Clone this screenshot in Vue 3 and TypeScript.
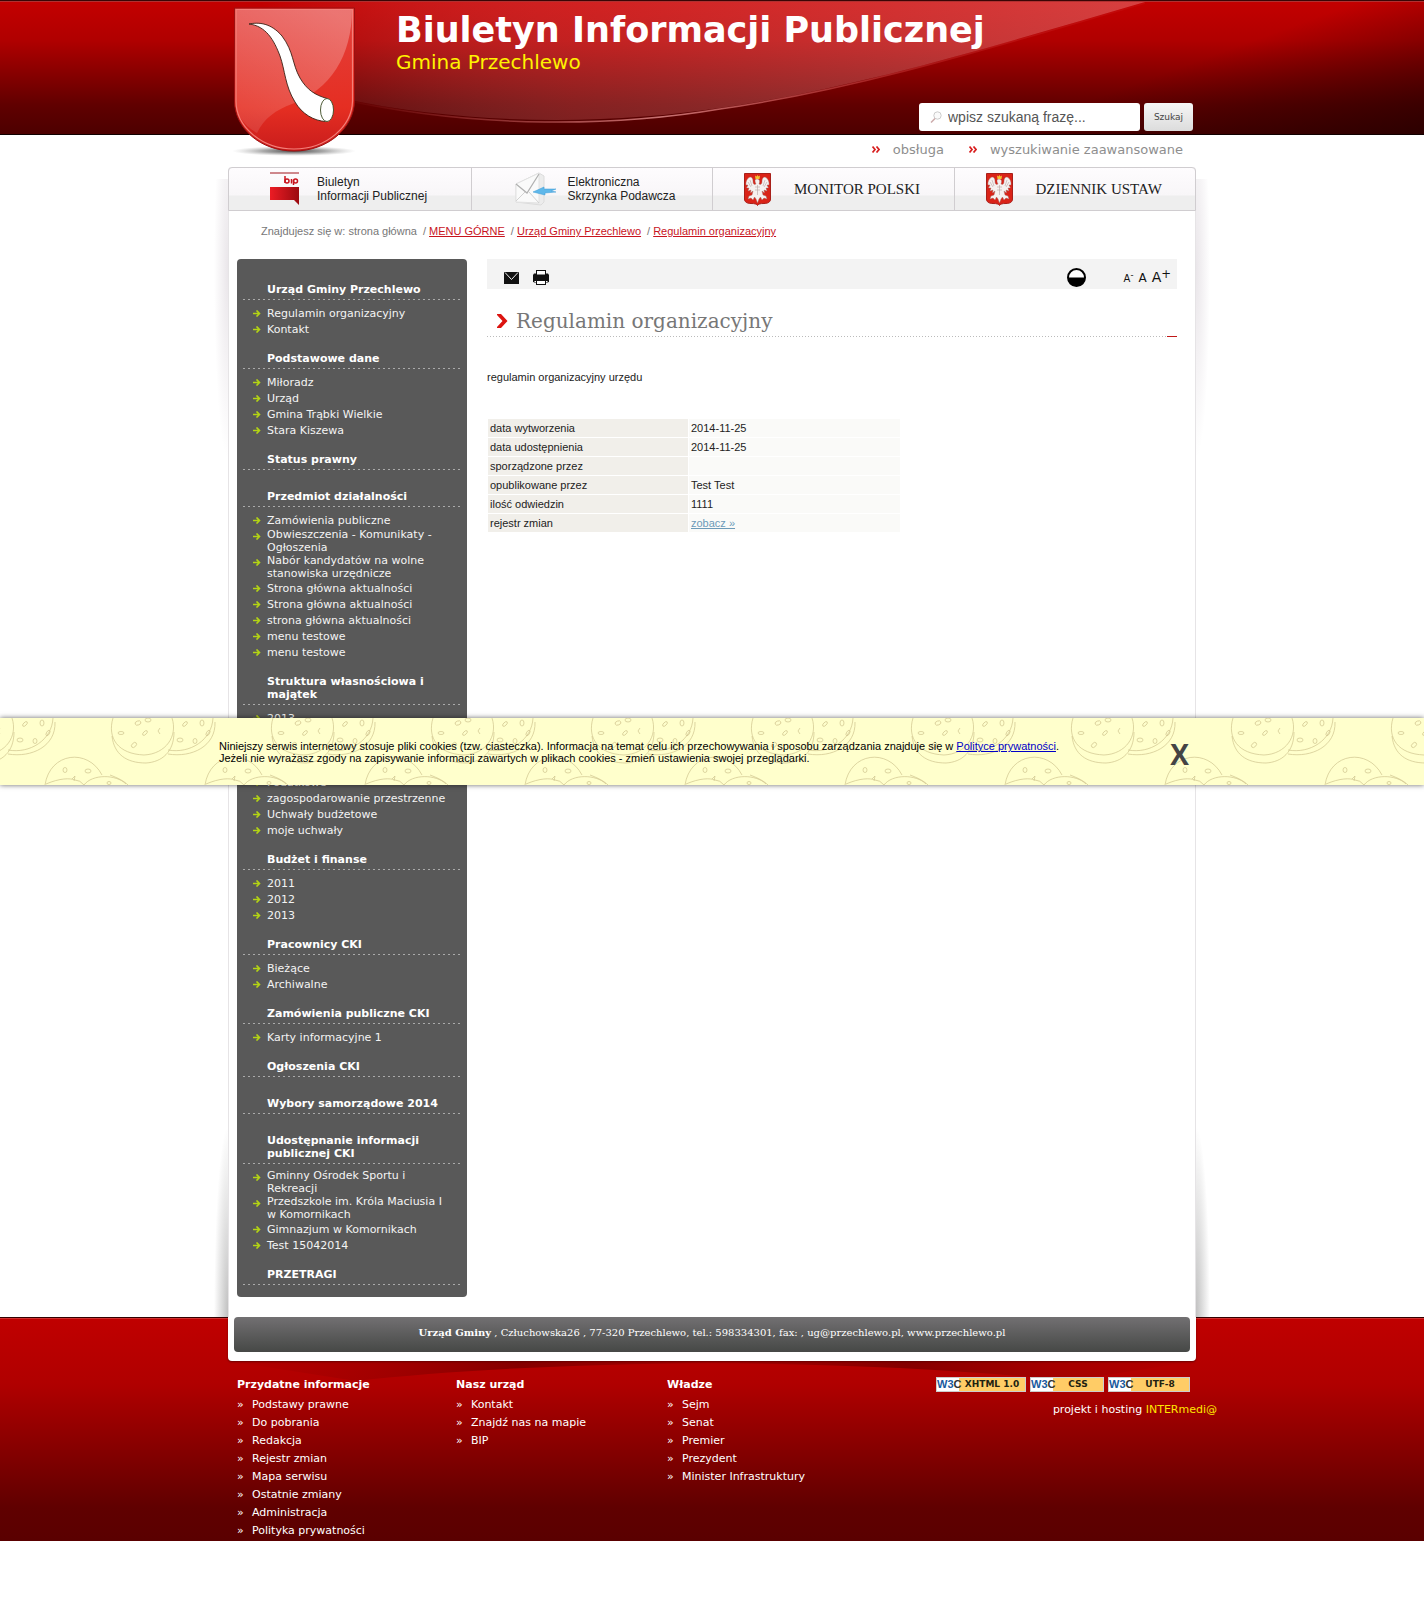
<script setup lang="ts">
import { ref } from 'vue'

interface MenuGroup {
  title: string
  items: string[]
}

interface FooterColumn {
  title: string
  items: string[]
}

interface Badge {
  label: string
  width: number
}

const menu: MenuGroup[] = [
  { title: 'Urząd Gminy Przechlewo', items: ['Regulamin organizacyjny', 'Kontakt'] },
  { title: 'Podstawowe dane', items: ['Miłoradz', 'Urząd', 'Gmina Trąbki Wielkie', 'Stara Kiszewa'] },
  { title: 'Status prawny', items: [] },
  {
    title: 'Przedmiot działalności',
    items: [
      'Zamówienia publiczne',
      'Obwieszczenia - Komunikaty - Ogłoszenia',
      'Nabór kandydatów na wolne stanowiska urzędnicze',
      'Strona główna aktualności',
      'Strona główna aktualności',
      'strona główna aktualności',
      'menu testowe',
      'menu testowe',
    ],
  },
  {
    title: 'Struktura własnościowa i majątek',
    items: [
      '2013',
      '',
      '',
      '',
      'Podatkowe',
      'zagospodarowanie przestrzenne',
      'Uchwały budżetowe',
      'moje uchwały',
    ],
  },
  { title: 'Budżet i finanse', items: ['2011', '2012', '2013'] },
  { title: 'Pracownicy CKI', items: ['Bieżące', 'Archiwalne'] },
  { title: 'Zamówienia publiczne CKI', items: ['Karty informacyjne 1'] },
  { title: 'Ogłoszenia CKI', items: [] },
  { title: 'Wybory samorządowe 2014', items: [] },
  {
    title: 'Udostępnanie informacji publicznej CKI',
    items: [
      'Gminny Ośrodek Sportu i Rekreacji',
      'Przedszkole im. Króla Maciusia I w Komornikach',
      'Gimnazjum w Komornikach',
      'Test 15042014',
    ],
  },
  { title: 'PRZETRAGI', items: [] },
]

const crumbs: string[] = ['MENU GÓRNE', 'Urząd Gminy Przechlewo', 'Regulamin organizacyjny']

const details: [string, string][] = [
  ['data wytworzenia', '2014-11-25'],
  ['data udostępnienia', '2014-11-25'],
  ['sporządzone przez', ''],
  ['opublikowane przez', 'Test Test'],
  ['ilość odwiedzin', '1111'],
]

const footerColumns: FooterColumn[] = [
  {
    title: 'Przydatne informacje',
    items: [
      'Podstawy prawne',
      'Do pobrania',
      'Redakcja',
      'Rejestr zmian',
      'Mapa serwisu',
      'Ostatnie zmiany',
      'Administracja',
      'Polityka prywatności',
    ],
  },
  { title: 'Nasz urząd', items: ['Kontakt', 'Znajdź nas na mapie', 'BIP'] },
  { title: 'Władze', items: ['Sejm', 'Senat', 'Premier', 'Prezydent', 'Minister Infrastruktury'] },
]

const badges: Badge[] = [
  { label: 'XHTML 1.0', width: 90 },
  { label: 'CSS', width: 74 },
  { label: 'UTF-8', width: 82 },
]

const phrase = ref('')
const cookieVisible = ref(true)
</script>

<template>
  <div class="page">
    <header class="top">
      <div class="wrap top-inner">
        <svg class="swoosh" width="968" height="135" viewBox="228 0 968 135" aria-hidden="true">
          <defs>
            <linearGradient id="swooshFill" x1="0" x2="1" y1="0" y2="0">
              <stop offset="0" stop-color="#fff" stop-opacity="0" />
              <stop offset="0.35" stop-color="#f88" stop-opacity="0.24" />
              <stop offset="1" stop-color="#fbb" stop-opacity="0.34" />
            </linearGradient>
            <linearGradient id="swooshEdge" x1="0" x2="1" y1="0" y2="0">
              <stop offset="0" stop-color="#e66" stop-opacity="0" />
              <stop offset="0.4" stop-color="#e99" stop-opacity="0.75" />
              <stop offset="0.75" stop-color="#d44" stop-opacity="0.3" />
              <stop offset="1" stop-color="#d44" stop-opacity="0.1" />
            </linearGradient>
          </defs>
          <path d="M260 2H1145C1000 44 860 88 720 108C620 123 480 128 340 98Z" fill="url(#swooshFill)" />
          <path d="M1145 3C1000 45 860 89 720 109C620 126 480 130 340 99" fill="none" stroke="url(#swooshEdge)" stroke-width="1.5" />
        </svg>
        <svg class="crest" width="128" height="150" viewBox="0 0 128 150" role="img" aria-label="Herb">
          <defs>
            <radialGradient id="crestShadow">
              <stop offset="0" stop-color="#333" stop-opacity="0.9" />
              <stop offset="0.5" stop-color="#555" stop-opacity="0.5" />
              <stop offset="1" stop-color="#999" stop-opacity="0" />
            </radialGradient>
            <linearGradient id="crestShine" x1="0.8" y1="0" x2="0.1" y2="1">
              <stop offset="0" stop-color="#fff" stop-opacity="0.28" />
              <stop offset="1" stop-color="#fff" stop-opacity="0.1" />
            </linearGradient>
            <linearGradient id="crestRed" x1="0" y1="0" x2="0" y2="1">
              <stop offset="0" stop-color="#e4403c" />
              <stop offset="0.7" stop-color="#e52e22" />
              <stop offset="1" stop-color="#c91c1c" />
            </linearGradient>
          </defs>
          <ellipse cx="64" cy="145" rx="62" ry="5" fill="url(#crestShadow)" />
          <path d="M4.500 2H124.500V95C124 122 98 145 64 145C30 145 4.500 122 4.500 95Z" fill="url(#crestRed)" stroke="#9c1010" stroke-width="1" />
          <path d="M6 3.500H122C122 50 100 84 62 98C46 104 34 112 27 127C13 119 6 108 6 95Z" fill="url(#crestShine)" />
          <path d="M6 95V3.500H122.500V95C122 120 97 143 64 143C31 143 6 120 6 95Z" fill="none" stroke="#f4807a" stroke-width="1.200" />
          <path d="M19 18C29 16 41 17 52 30C64 46 62 58 70 72C77 84 85 89 97 92.500L96 115.500C84 115 72 108 65 96C55 80 55 64 50 50C44 34 36 20 19 18Z" fill="#fff" stroke="#3a2015" stroke-width="0.900" />
          <ellipse cx="97" cy="104" rx="6.500" ry="11.500" fill="#fff" stroke="#3a4a20" stroke-width="0.900" />
        </svg>
        <div class="brand">
          <h1>Biuletyn Informacji Publicznej</h1>
          <p>Gmina Przechlewo</p>
        </div>
        <form class="search" @submit.prevent>
          <label class="field">
            <svg width="12" height="12" viewBox="0 0 12 12" aria-hidden="true">
              <circle cx="7.500" cy="4.500" r="3.700" fill="#fafafa" stroke="#ccc" />
              <path d="M5 7.500L1 11.500" stroke="#caa" stroke-width="1.500" />
            </svg>
            <input v-model="phrase" type="text" placeholder="wpisz szukaną frazę..." aria-label="wpisz szukaną frazę" />
          </label>
          <button type="submit">Szukaj</button>
        </form>
      </div>
    </header>

    <nav class="wrap quick">
      <a v-for="q in ['obsługa', 'wyszukiwanie zaawansowane']" :key="q" href="#">
        <svg width="8" height="7" viewBox="0 0 8 7" aria-hidden="true">
          <path d="M0.500 0.500L3 3.500L0.500 6.500M4.500 0.500L7 3.500L4.500 6.500" fill="none" stroke="#d81e1e" stroke-width="1.700" />
        </svg>
        <span>{{ q }}</span>
      </a>
    </nav>

    <div class="wrap panel">
      <nav class="tabs">
        <a href="#" class="tab tab-bip">
          <svg width="30" height="34" viewBox="0 0 30 34" aria-hidden="true">
            <defs>
              <linearGradient id="bipRed" x1="0" x2="1">
                <stop offset="0" stop-color="#ec1c24" />
                <stop offset="1" stop-color="#9b0a10" />
              </linearGradient>
            </defs>
            <path d="M0 1H29" stroke="#a0141c" stroke-width="1" />
            <path d="M0 15H29V33L24 28H0Z" fill="url(#bipRed)" />
            <g fill="none" stroke="#c8141e" stroke-width="1.500">
              <path d="M15 4V11" />
              <circle cx="17" cy="9" r="2" />
              <path d="M21.500 7V11.500" />
              <circle cx="25.500" cy="9" r="2" />
              <path d="M23.500 8V13" />
            </g>
          </svg>
          <span>Biuletyn<br />Informacji Publicznej</span>
        </a>
        <a href="#" class="tab tab-box">
          <svg width="42" height="34" viewBox="0 0 42 34" aria-hidden="true">
            <path d="M1 12L24 1L29 4V30L26 33L1 30Z" fill="#ececec" stroke="#dcdcdc" />
            <path d="M1 12L24 1V31L1 30Z" fill="#fafafa" stroke="#e2e2e2" />
            <path d="M1 12L12 21L24 2" fill="none" stroke="#b0b0b0" stroke-width="1.200" />
            <path d="M1 29L10 20M24 31L14 20" stroke="#d2d2d2" />
            <path d="M18 20L29 15L29 17H41L36 19L41 20L30 21V23Z" fill="#5fb8ea" stroke="#3a9bd6" stroke-width="0.500" />
          </svg>
          <span>Elektroniczna<br />Skrzynka Podawcza</span>
        </a>
        <a v-for="law in ['MONITOR POLSKI', 'DZIENNIK USTAW']" :key="law" href="#" class="tab tab-law">
          <svg width="27" height="33" viewBox="0 0 27 33" aria-hidden="true">
            <path d="M0.500 0.500H26.500V26C26.500 29 24 30.500 20 30.500C16 30.500 14.500 31 13.500 32.500C12.500 31 11 30.500 7 30.500C3 30.500 0.500 29 0.500 26Z" fill="#da2318" stroke="#a8201a" />
            <path d="M13 6C10 6 11 9 12 11C10 12 9 11 9 8C9 6 8 4 6 4C3 5 1.500 9 2 12L4 12L2.500 15L5 15L4 18L7 17L6.500 20L9 18L8 22L5 23L4 26L7 25L9 27L10.500 24L12 26L13.500 30L15 26L16.500 24L18 27L20 25L23 26L22 23L19 22L18 18L20.500 20L20 17L23 18L22 15L24.500 15L23 12L25 12C25.500 9 24 5 21 4C19 4 18 6 18 8C18 11 17 12 15 11C16 9 16 6 13 6Z" fill="#f6f1f0" stroke="#9a6a66" stroke-width="0.400" />
            <path d="M6 7L8 13M4 9L7 14M21 7L19 13M23 9L20 14M13.500 12V22M11 14L16 14M11 17H16" stroke="#b9a5a3" stroke-width="0.600" />
            <path d="M11 2.500L12.500 3.500L13.500 2L14.500 3.500L16 2.500L15.500 6H11.500Z" fill="#f2c230" />
          </svg>
          <span>{{ law }}</span>
        </a>
      </nav>

      <nav class="crumbs">
        <span class="home">Znajdujesz się w: strona główna</span>
        <span v-for="c in crumbs" :key="c" class="crumb">/ <a href="#">{{ c }}</a></span>
      </nav>

      <div class="columns">
        <aside class="side">
          <section v-for="group in menu" :key="group.title">
            <h2>{{ group.title }}</h2>
            <ul>
              <li v-for="(item, i) in group.items" :key="i">
                <svg width="8" height="7" viewBox="0 0 8 7" aria-hidden="true">
                  <path d="M0 3.500H6M3.500 0.500L6.500 3.500L3.500 6.500" fill="none" stroke="#b4d414" stroke-width="1.600" />
                </svg>
                <a href="#">{{ item }}</a>
              </li>
            </ul>
          </section>
        </aside>

        <main class="content">
          <div class="tools">
            <a href="#" aria-label="Wyślij">
              <svg width="15" height="12" viewBox="0 0 15 12">
                <rect width="15" height="12" fill="#111" />
                <path d="M1 0.500L7.500 7.500L14 0.500" fill="none" stroke="#eee" stroke-width="1" />
              </svg>
            </a>
            <a href="#" aria-label="Drukuj">
              <svg width="16" height="15" viewBox="0 0 16 15">
                <path d="M1 3.500H15L16 5V11.500L15 12.500H1L0 11.500V5Z" fill="#111" />
                <rect x="3.500" y="0.500" width="9" height="4.500" fill="#fff" stroke="#111" />
                <rect x="3.500" y="10.500" width="9" height="4" fill="#fff" stroke="#111" />
                <path d="M1.500 11.500H3M13 11.500H14.500" stroke="#fff" />
              </svg>
            </a>
            <a href="#" class="contrast" aria-label="Kontrast">
              <svg width="19" height="19" viewBox="0 0 19 19">
                <circle cx="9.500" cy="9.500" r="8.500" fill="#fff" stroke="#000" stroke-width="2" />
                <path d="M1 9.500H18A8.500 8.500 0 0 1 1 9.500Z" fill="#000" />
              </svg>
            </a>
            <div class="sizes">
              <a href="#" class="size-s">A<sup>-</sup></a>
              <a href="#" class="size-m">A</a>
              <a href="#" class="size-l">A<sup>+</sup></a>
            </div>
          </div>

          <h2 class="heading">
            <svg width="11" height="14" viewBox="0 0 11 14" aria-hidden="true">
              <path d="M0 0H4L10.500 7L4 14H0V13L5.500 7L0 1Z" fill="#dc1410" />
            </svg>
            Regulamin organizacyjny
          </h2>
          <p class="lead">regulamin organizacyjny urzędu</p>

          <table class="details">
            <tbody>
              <tr v-for="row in details" :key="row[0]">
                <th scope="row">{{ row[0] }}</th>
                <td>{{ row[1] }}</td>
              </tr>
              <tr>
                <th scope="row">rejestr zmian</th>
                <td><a href="#">zobacz »</a></td>
              </tr>
            </tbody>
          </table>
        </main>
      </div>
    </div>

    <footer class="bottom">
      <div class="wrap panel-end">
        <p class="address">
          <b>Urząd Gminy</b> , Człuchowska26 , 77-320 Przechlewo, tel.: 598334301, fax: , ug@przechlewo.pl, www.przechlewo.pl
        </p>
      </div>
      <svg class="wrap arc" height="24" viewBox="0 0 968 24" preserveAspectRatio="none" aria-hidden="true">
        <defs>
          <linearGradient id="arcFade" x1="0" x2="1">
            <stop offset="0" stop-color="#600" stop-opacity="0" />
            <stop offset="0.15" stop-color="#600" stop-opacity="0.2" />
            <stop offset="0.3" stop-color="#500" stop-opacity="0.5" />
            <stop offset="0.5" stop-color="#500" stop-opacity="0.1" />
            <stop offset="0.7" stop-color="#500" stop-opacity="0.5" />
            <stop offset="0.85" stop-color="#600" stop-opacity="0.2" />
            <stop offset="1" stop-color="#600" stop-opacity="0" />
          </linearGradient>
        </defs>
        <path d="M0 0H968L840 20Q700 4 484 2Q268 4 128 20Z" fill="url(#arcFade)" />
      </svg>
      <div class="wrap links">
        <section v-for="col in footerColumns" :key="col.title">
          <h3>{{ col.title }}</h3>
          <ul>
            <li v-for="item in col.items" :key="item"><a href="#">{{ item }}</a></li>
          </ul>
        </section>
        <div class="credits">
          <div class="badges">
            <a v-for="b in badges" :key="b.label" href="#" class="badge" :style="{ width: b.width + 'px' }">
              <span class="w3"><i>W3</i>C</span><b>{{ b.label }}</b>
            </a>
          </div>
          <p>projekt i hosting <a href="#">INTERmedi@</a></p>
        </div>
      </div>
    </footer>

    <div v-if="cookieVisible" class="cookies">
      <svg class="cookie-art" width="100%" height="67" aria-hidden="true">
        <defs>
          <pattern id="cookies" width="160" height="67" patternUnits="userSpaceOnUse">
            <g fill="none" stroke="#cfc38c" stroke-width="0.700">
              <g v-for="dx in [0, -160]" :key="dx" :transform="`translate(${dx} 0)`">
                <path d="M113 0C107 20 118 36 144 37C166 36 178 18 172 0" />
                <path d="M112 18C114 36 126 45 146 45C162 44 174 34 174 14" />
                <path d="M168 32C190 36 212 22 213 0" />
                <path d="M168 36C192 40 216 28 215 4" />
                <ellipse cx="138" cy="5" rx="3" ry="2" transform="rotate(-20 138 5)" />
                <ellipse cx="148" cy="2" rx="3" ry="2" />
                <ellipse cx="121" cy="15" rx="3" ry="1.500" />
                <ellipse cx="145" cy="15" rx="3" ry="1.500" transform="rotate(-45 145 15)" />
                <path d="M160 10L158 13L160 16" />
                <ellipse cx="134" cy="27" rx="3" ry="2" transform="rotate(-45 134 27)" />
                <ellipse cx="185" cy="6" rx="3" ry="1.500" transform="rotate(-45 185 6)" />
                <ellipse cx="202" cy="5" rx="2" ry="3" />
                <ellipse cx="208" cy="15" rx="1.500" ry="3" transform="rotate(30 208 15)" />
                <ellipse cx="180" cy="22" rx="3" ry="2" />
                <ellipse cx="195" cy="23" rx="2" ry="2.500" />
              </g>
              <path d="M45 67C50 34 88 30 102 57" />
              <path d="M46 66C60 60 70 60 75 62Q80 62 84 67C92 56 116 56 126 66" />
              <path d="M72 61L75 58L74 63" />
              <path d="M110 57C118 60 124 63 128 67" />
              <ellipse cx="65" cy="52" rx="2" ry="2.500" />
              <ellipse cx="88" cy="53" rx="3" ry="2" />
              <ellipse cx="109" cy="65" rx="2" ry="1.500" />
            </g>
          </pattern>
        </defs>
        <rect width="100%" height="67" fill="url(#cookies)" />
      </svg>
      <div class="cookie-inner">
        <p>
          Niniejszy serwis internetowy stosuje pliki cookies (tzw. ciasteczka). Informacja na temat celu ich przechowywania i sposobu zarządzania znajduje się w
          <a href="#">Polityce prywatności</a>.<br />
          Jeżeli nie wyrażasz zgody na zapisywanie informacji zawartych w plikach cookies - zmień ustawienia swojej przeglądarki.
        </p>
        <button type="button" @click="cookieVisible = false">X</button>
      </div>
    </div>
  </div>
</template>

<style>
body {
  background: #fff;
}
</style>

<style scoped>
.page {
  position: relative;
  font: 11px/13px 'Liberation Sans', Arial, sans-serif;
  color: #222;
}

h1, h2, h3, p, ul {
  margin: 0;
  padding: 0;
}

ul {
  list-style: none;
}

svg {
  display: block;
  flex: none;
}

.wrap {
  width: 968px;
  max-width: 100%;
  margin: 0 auto;
  box-sizing: border-box;
}

/* header */
.top {
  height: 135px;
  background:
    linear-gradient(#3a0505, #3a0505) 0 0 / 100% 1px no-repeat,
    linear-gradient(#b03030, #b03030) 0 1px / 100% 1px no-repeat,
    linear-gradient(#100, #100) 0 100% / 100% 1px no-repeat,
    linear-gradient(160deg, rgba(30, 0, 0, 0) 76%, rgba(30, 0, 0, 0.7) 100%),
    linear-gradient(#c40000 0, #b00000 30%, #600000 78%, #4c0000 100%);
}

.top-inner {
  position: relative;
  display: flex;
  height: 135px;
}

.swoosh {
  position: absolute;
  top: 0;
  left: 0;
}

.crest {
  position: relative;
  margin: 6px 0 0 2px;
}

.brand {
  position: relative;
  margin-left: 38px;
  padding-top: 9px;
  font-family: 'DejaVu Sans', Verdana, sans-serif;
}

.brand h1 {
  color: #fff;
  font-size: 35px;
  line-height: 42px;
  white-space: nowrap;
}

.brand p {
  color: #fff200;
  font-size: 20px;
  line-height: 22px;
}

.search {
  position: absolute;
  right: 3px;
  bottom: 4px;
  display: flex;
  gap: 4px;
}

.field {
  display: flex;
  align-items: center;
  gap: 6px;
  width: 221px;
  height: 28px;
  padding: 0 11px;
  box-sizing: border-box;
  border-radius: 3px;
  background: #fff;
}

.field input {
  flex: 1;
  min-width: 0;
  padding: 0;
  border: 0;
  outline: 0;
  background: none;
  font: 14px 'Liberation Sans', Arial, sans-serif;
}

.field input::placeholder {
  color: #555;
  opacity: 1;
}

.search button {
  width: 49px;
  height: 28px;
  padding: 0;
  border: 0;
  border-radius: 3px;
  background: linear-gradient(#f6f6f6, #dcdcdc);
  color: #444;
  font: 9px 'DejaVu Sans', Verdana, sans-serif;
}

.quick {
  display: flex;
  justify-content: flex-end;
  gap: 25px;
  height: 32px;
  padding: 7px 13px 0 0;
  font: 13px/15px 'DejaVu Sans', Verdana, sans-serif;
}

.quick a {
  display: flex;
  align-items: center;
  gap: 13px;
  height: 15px;
  color: #8e8e8e;
  text-decoration: none;
}

/* panel */
.panel {
  position: relative;
  border-radius: 4px 4px 0 0;
  background: #fff;
  box-shadow: inset 1px 0 #e6e4e6, inset -1px 0 #e6e4e6;
}

.panel::before,
.panel::after {
  content: '';
  position: absolute;
  top: 12px;
  bottom: 0;
  width: 14px;
  background:
    radial-gradient(ellipse 14px 190px at 100% 90px, rgba(90, 60, 90, 0.13), transparent) 0 0 / 100% 280px no-repeat,
    radial-gradient(ellipse 14px 190px at 100% 100%, rgba(60, 60, 60, 0.32), transparent) 0 100% / 100% 190px no-repeat;
}

.panel::before {
  left: -14px;
}

.panel::after {
  right: -14px;
  transform: scaleX(-1);
}

.tabs {
  display: grid;
  grid-template-columns: repeat(4, 1fr);
  height: 44px;
  box-sizing: border-box;
  border: 1px solid #d0cdd0;
  border-radius: 4px 4px 0 0;
  background: linear-gradient(#fefcfe 0, #f8f6f8 65%, #eee 66%, #eee 100%);
}

.tab {
  display: flex;
  align-items: center;
  color: #222;
  text-decoration: none;
  font-size: 12px;
  line-height: 14px;
}

.tab + .tab {
  border-left: 1px solid #d0cdd0;
}

.tab-bip {
  gap: 17px;
  padding-left: 41px;
}

.tab-box {
  gap: 11px;
  padding-left: 43px;
}

.tab-law {
  gap: 23px;
  padding-left: 31px;
  font: 15px/18px 'Liberation Serif', 'Times New Roman', serif;
}

.crumbs {
  padding: 14px 33px 21px;
  color: #777;
}

.crumb {
  margin-left: 6px;
}

.crumb a {
  color: #c8141e;
}

.columns {
  display: flex;
  gap: 20px;
  padding: 0 19px 20px 9px;
}

.side {
  flex: none;
  width: 230px;
  padding: 9px 6px 7px;
  box-sizing: border-box;
  border-radius: 4px;
  background: #595959;
  color: #fff;
  font-family: 'DejaVu Sans', Verdana, sans-serif;
}

.side h2 {
  margin: 15px 0 5px;
  padding: 0 10px 4px 24px;
  background: repeating-linear-gradient(90deg, #aaa 0 2px, transparent 2px 5px) 0 100% / 100% 1px no-repeat;
  font-size: 11px;
}

.side section {
  display: flow-root;
}

.side ul {
  padding: 0 10px;
}

.side li {
  display: flex;
  gap: 6px;
  min-height: 16px;
  align-items: center;
}

.side li svg {
  align-self: flex-start;
  margin-top: 5px;
}

.side a {
  color: #f4f4f4;
  text-decoration: none;
}

.content {
  flex: 1;
  min-width: 0;
}

.tools {
  display: flex;
  align-items: center;
  height: 30px;
  padding: 7px 6px 0 17px;
  box-sizing: border-box;
  gap: 14px;
  background: #f3f3f3;
}

.contrast {
  margin-left: auto;
}

.sizes {
  display: flex;
  align-items: baseline;
  gap: 5px;
  margin-left: 24px;
  font-family: 'DejaVu Sans', Verdana, sans-serif;
}

.sizes a {
  color: #111;
  text-decoration: none;
  line-height: 16px;
}

.sizes sup {
  vertical-align: 4px;
  line-height: 0;
}

.size-s {
  font-size: 10px;
}

.size-m {
  font-size: 12px;
}

.size-l {
  font-size: 14px;
}

.heading {
  display: flex;
  align-items: center;
  gap: 8px;
  margin-top: 20px;
  padding: 0 0 4px 10px;
  background:
    linear-gradient(#c01818, #c01818) 100% 100% / 10px 1px no-repeat,
    repeating-linear-gradient(90deg, #bbb 0 1px, transparent 1px 3px) 0 100% / 100% 1px no-repeat;
  color: #777;
  font: 20px/24px 'DejaVu Serif', Georgia, serif;
}

.lead {
  margin: 34px 0;
}

.details {
  width: 414px;
  max-width: 100%;
  border-spacing: 1px;
}

.details th,
.details td {
  height: 18px;
  padding: 0 2px;
  box-sizing: border-box;
  background: #fafaf8;
  font-weight: normal;
  text-align: left;
}

.details th {
  width: 200px;
  background: #f1efea;
}

.details a {
  color: #6d9bb9;
}

/* footer */
.bottom {
  background:
    linear-gradient(#300, #300) 0 0 / 100% 1px no-repeat,
    linear-gradient(#d23030, #d23030) 0 1px / 100% 1px no-repeat,
    linear-gradient(#c00000 0, #b00000 30%, #600000 85%, #5a0000 100%);
}

.panel-end {
  padding: 0 6px 9px;
  border-radius: 0 0 4px 4px;
  background: #fff;
  box-shadow: 0 1px 2px rgba(60, 0, 0, 0.6);
}

.address {
  height: 35px;
  border-radius: 4px;
  background: linear-gradient(#727072, #464846);
  color: #fff;
  font: 10px/32px 'DejaVu Serif', Georgia, serif;
  text-align: center;
}

.arc {
  margin-bottom: -24px;
}

.links {
  position: relative;
  display: flex;
  padding: 17px 0 1px 9px;
  color: #fff;
  font-family: 'DejaVu Sans', Verdana, sans-serif;
}

.links section {
  flex: 0 1 211px;
}

.links section:first-child {
  flex-basis: 219px;
}

.links h3 {
  margin-bottom: 5px;
  font-size: 11px;
}

.links li {
  line-height: 18px;
}

.links li::before {
  content: '»';
  display: inline-block;
  width: 15px;
}

.links section a {
  color: #fff;
  text-decoration: none;
}

.credits {
  margin: -1px -21px 0 auto;
}

.badges {
  display: flex;
  gap: 4px;
  width: 281px;
}

.badge {
  display: flex;
  height: 15px;
  box-sizing: border-box;
  border: 1px solid #ccc;
  background: #fc6;
  color: #221;
  font: bold 9px/13px 'DejaVu Sans', Verdana, sans-serif;
  text-align: center;
  text-decoration: none;
}

.badge b {
  flex: 1;
  font-size: 9px;
  white-space: nowrap;
}

.w3 {
  width: 22px;
  background: #fff;
  color: #333;
  font: bold 11px/13px 'Liberation Sans', Arial, sans-serif;
}

.w3 i {
  color: #1a5a9e;
  font-style: normal;
}

.credits p {
  margin-top: 11px;
  text-align: right;
}

.credits p a {
  color: #ffe600;
  text-decoration: none;
}

/* cookie notice lies over the page */
.cookies {
  position: absolute;
  top: 718px;
  left: 0;
  right: 0;
  height: 67px;
  background: #ffffcc;
  box-shadow: 0 0 5px rgba(0, 0, 0, 0.6);
  color: #000;
}

.cookie-art {
  position: absolute;
  inset: 0;
}

.cookie-inner {
  position: relative;
  display: flex;
  justify-content: space-between;
  width: 986px;
  max-width: 100%;
  margin: 0 auto;
  padding: 22px 16px 0 0;
  box-sizing: border-box;
  line-height: 12px;
}

.cookie-inner a {
  color: #0000c8;
}

.cookie-inner button {
  height: 28px;
  padding: 0;
  border: 0;
  background: none;
  color: #444;
  font: bold 28px/28px 'Open Sans', 'Liberation Sans', sans-serif;
}
</style>
